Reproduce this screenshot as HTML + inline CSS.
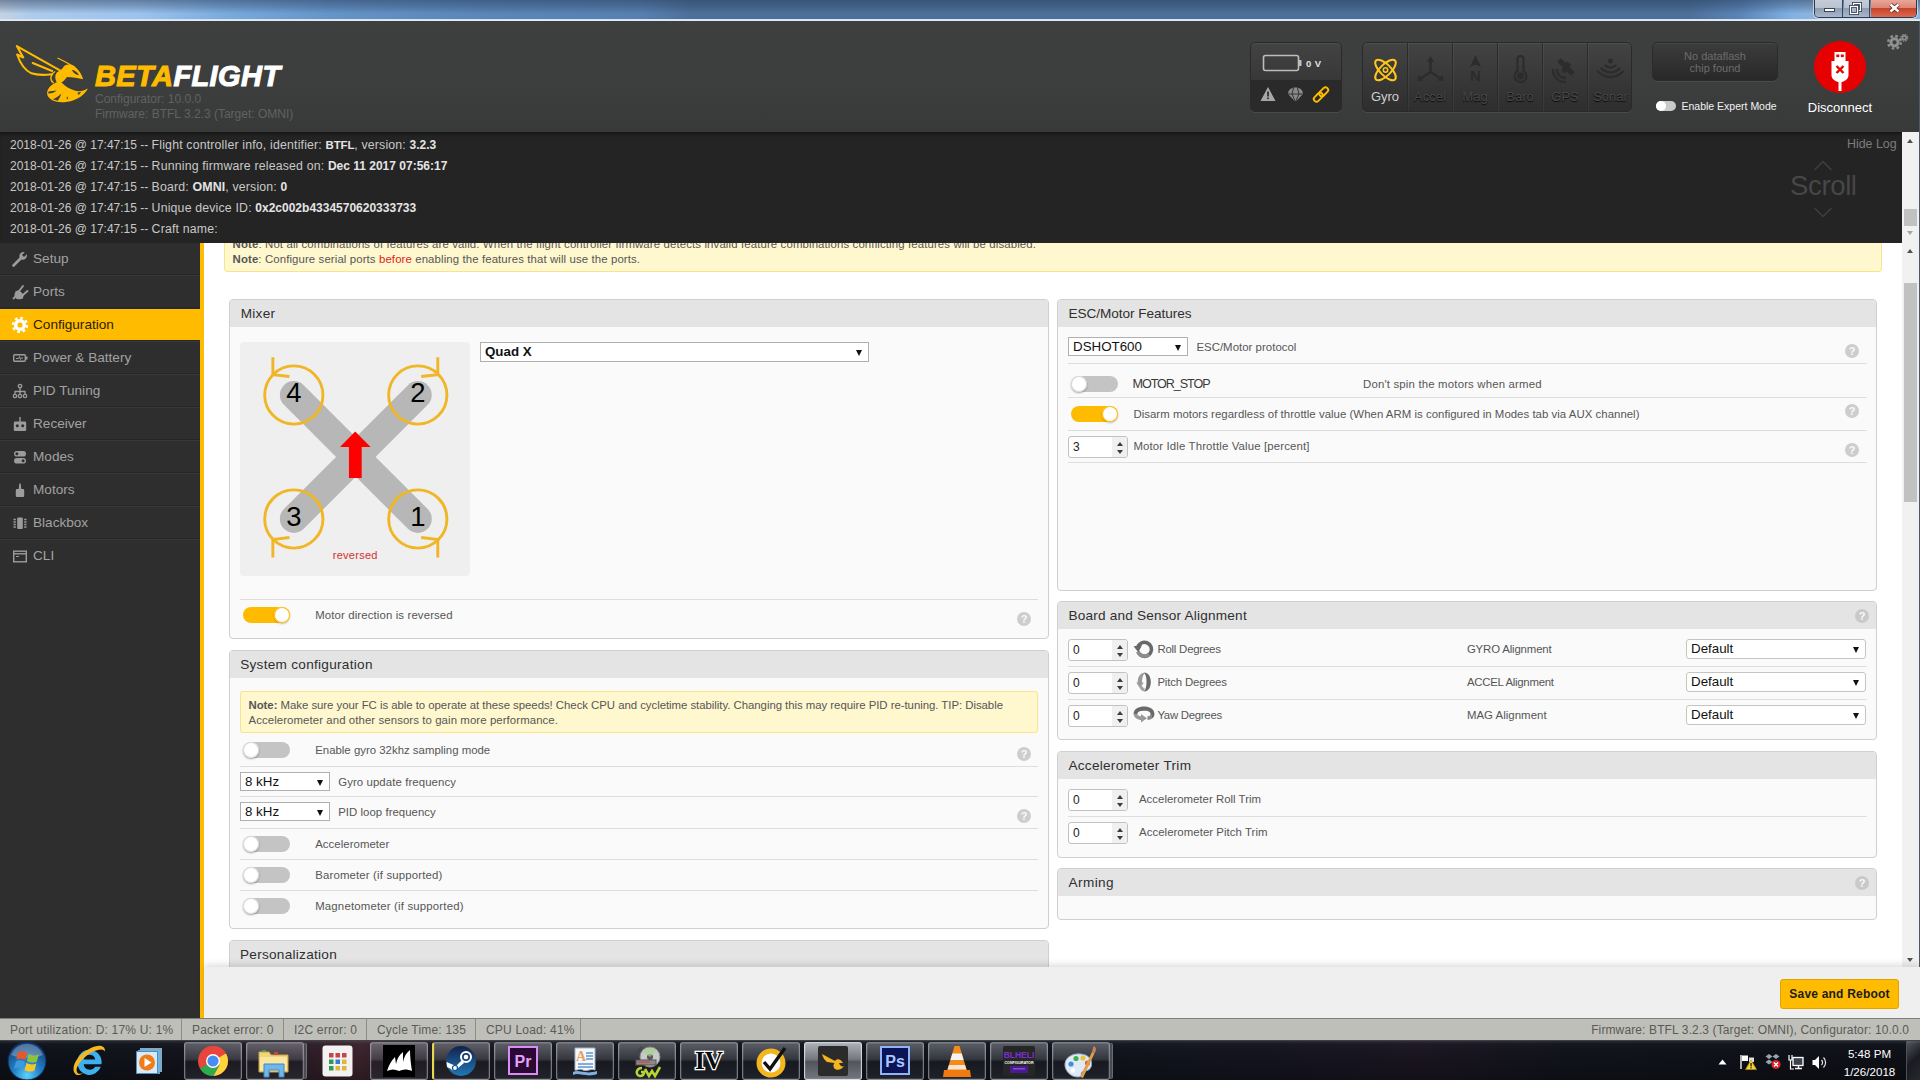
<!DOCTYPE html>
<html lang="en">
<head>
<meta charset="utf-8">
<title>Betaflight Configurator</title>
<style>
*{box-sizing:border-box;margin:0;padding:0}
html,body{width:1920px;height:1080px;overflow:hidden;background:#fff}
body{font-family:"Liberation Sans",sans-serif;font-size:12px;color:#303030;position:relative}
.abs{position:absolute}
/* ---------- window title bar ---------- */
#titlebar{left:0;top:0;width:1920px;height:21px;background:linear-gradient(180deg,rgba(38,58,88,.5) 0,rgba(38,58,88,.3) 30%,rgba(38,58,88,0) 65%),linear-gradient(90deg,#c5d3e3 0,#aecbec 30px,#9cc3ee 140px,#78a9dc 230px,#6594c8 330px,#5a86b8 480px,#5780b0 640px,#4d7099 690px,#4d7099 1690px,#5a84b6 1740px,#7fb0e3 1790px,#8fb4dc 1812px,#8fb4dc 1920px)}
#titlebar .hl{left:0;top:19px;width:1920px;height:2px;background:linear-gradient(180deg,#cfe0f3,#e8eef5)}
#winbtn{left:1814px;top:0;width:103px;height:18px;border:1px solid #2b3a4e;border-top:none;border-radius:0 0 5px 5px;overflow:hidden;box-shadow:0 0 0 1px rgba(255,255,255,.55)}
#winbtn div{position:absolute;top:0;height:17px}
/* ---------- header ---------- */
#header{left:0;top:21px;width:1920px;height:111px;background:linear-gradient(180deg,#3e403f 0,#3c3e3d 60%,#383a39 100%)}

/* header widgets */
#logo-text{left:95px;top:59px;font:italic bold 29px/34px "Liberation Sans",sans-serif;letter-spacing:.4px;color:#fff;white-space:nowrap;transform-origin:0 0;-webkit-text-stroke:1.1px currentColor}
#logo-text b{color:#ffbb00;-webkit-text-stroke:1.1px #ffbb00}
.ver{left:95px;font-size:12px;line-height:16px;color:#616161;white-space:nowrap}
.hbox{border-radius:5px;background:linear-gradient(180deg,#434343 0,#2e2e2e 100%);border:1px solid #2a2a2a;box-shadow:0 1px 0 rgba(255,255,255,.08), inset 0 1px 0 rgba(255,255,255,.06)}
#quad{left:1250px;top:42px;width:92px;height:70px;overflow:hidden}
#quad .bot{left:0;top:37px;width:92px;height:33px;background:#2a2a2a}
#sensors{left:1362px;top:42px;width:270px;height:70px;overflow:hidden}
#sensors .cell{position:absolute;top:0;width:45px;height:70px;border-right:1px solid #2b2b2b;box-shadow:1px 0 0 rgba(255,255,255,.05);text-align:center;color:#474747;font-size:12px;text-shadow:0 1px 1px rgba(0,0,0,.85)}
#sensors .cell span{position:absolute;left:0;right:0;top:47px;line-height:14px;font-size:13px}
#sensors .cell.on{color:#cfcfcf;text-shadow:none}
#dflash{left:1652px;top:42px;width:126px;height:39px;background:linear-gradient(180deg,#3c3c3c 0,#282828 100%);color:#6c6c6c;font-size:11px;line-height:12px;text-align:center;padding-top:7px}
#expert{left:1681.5px;top:99px;font-size:10.5px;line-height:14px;color:#f2f2f2;white-space:nowrap}
#expsw{left:1656px;top:101px;width:20px;height:10px;border-radius:5px;background:#c9c9c9}
#expsw i{position:absolute;left:0;top:0;width:10px;height:10px;border-radius:5px;background:#fff}
#disc{left:1814px;top:41px;width:52px;height:52px;border-radius:26px;background:#e60000}
#disctxt{left:1790px;top:100px;width:100px;text-align:center;font-size:13px;line-height:16px;color:#fff}
/* ---------- log ---------- */
#log{left:0;top:132px;width:1902px;height:111px;z-index:3;background:#242424;color:#cfcfcf;box-shadow:inset 0 4px 5px -3px rgba(0,0,0,.6)}
#logscroll{left:1902px;top:132px;width:17px;height:111px;z-index:3}

#log .ln{position:absolute;left:10px;white-space:nowrap;font-size:12.3px;letter-spacing:.18px;line-height:21px;height:21px;color:#c8c8c8}
#log .ln i{font-style:normal;font-size:12px;letter-spacing:0}
#log .ln b{font-weight:bold;color:#e4e4e4;font-size:12px;letter-spacing:0}
#log .ln b.a{font-size:11.4px;letter-spacing:-.1px}
#log .ln b.o{font-size:12.4px;letter-spacing:.1px}
#hidelog{z-index:4;left:1847px;top:136px;font-size:12.4px;line-height:16px;color:#7c7c7c;white-space:nowrap}
#scrolltxt{z-index:4;left:1790px;top:169px;font-size:27.6px;line-height:34px;color:#474747;letter-spacing:-.4px}
.sb{background:#f1f1f1}
.sb .thumb{position:absolute;left:2px;width:13px;background:#c1c1c1}
.sb .arr{position:absolute;left:5px;width:0;height:0;border-left:3.5px solid transparent;border-right:3.5px solid transparent}
.sb .up{border-bottom:4px solid #505050}
.sb .dn{border-top:4px solid #505050}
.sb .dis.dn{border-top-color:#a3a3a3}
.sb .dis.up{border-bottom-color:#a3a3a3}
/* ---------- sidebar ---------- */
#side{left:0;top:242px;width:200px;height:776px;background:#2e2e2e}
#sidebar-line{left:200px;top:242px;width:4px;height:776px;background:#ffbb00}

#side .tab{position:absolute;left:0;width:200px;height:33px;border-top:1px solid #383838;border-bottom:1px solid #262626;color:#a2a2a2;font-size:13.6px;line-height:31px;padding-left:33px;white-space:nowrap}
#side .tab svg{position:absolute;left:11px;top:7px}
#side .tab.act{background:#ffbb00;color:#2b2205;border-top-color:#2b2b2b;border-bottom-color:#262626}
#side .tab:first-child{border-top-color:#2e2e2e}
#side .tab:last-child{border-bottom-color:#2e2e2e}
/* ---------- content ---------- */
#content{left:204px;top:242px;width:1698px;height:725px;background:#fff;overflow:hidden}
#cscroll{left:1902px;top:242px;width:17px;height:725px}
#rborder{left:1919px;top:21px;width:1px;height:946px;background:#4b5a6b}
#toolbar{left:204px;top:967px;width:1716px;height:51px;background:#efefef;box-shadow:0 -3px 6px rgba(0,0,0,.12)}

/* content widgets (coordinates inside #content are page coords minus (204,242)) */
#content .box{position:absolute;border:1px solid #cfcfcf;border-radius:4px;background:#fafafa;overflow:hidden}
#content .box .hd{position:absolute;left:0;top:0;right:0;height:27px;background:#e4e4e4}
#content .t{position:absolute;white-space:nowrap;font-size:11.4px;line-height:16px;height:16px;color:#565656;transform-origin:0 50%}
#content .t.h{font-size:13.6px;line-height:18px;height:18px;color:#2f2f2f}
#content .sep{position:absolute;height:1px;background:#dedede}
#content .tg{position:absolute;width:47px;height:16px;border-radius:8px;background:#c4c4c4}
#content .tg i{position:absolute;left:0;top:0;width:16px;height:16px;border-radius:8px;background:#fff;box-shadow:0 1px 2px rgba(0,0,0,.35), inset 0 0 0 1px #d8d8d8}
#content .tg.on{background:#ffbb00}
#content .tg.on i{left:31px;box-shadow:inset 0 0 0 1px #ffbb00,0 1px 2px rgba(0,0,0,.25)}
#content .sel{position:absolute;height:20px;border:1px solid #b0b0b0;border-radius:0;background:#fff;font-size:13.33px;line-height:18px;color:#111;padding-left:4px;white-space:nowrap}
#content .sel:after{content:"";position:absolute;right:6.5px;top:6.5px;border-left:3.2px solid transparent;border-right:3.2px solid transparent;border-top:6px solid #111}
#content .num{position:absolute;width:60px;height:22px;border:1px solid #c2c2c2;border-radius:3px;background:#fff;font-size:12px;line-height:20px;color:#222;padding-left:4px}
#content .num:before{content:"";position:absolute;right:4px;top:4.5px;border-left:3.5px solid transparent;border-right:3.5px solid transparent;border-bottom:4px solid #3c3c3c}
#content .num:after{content:"";position:absolute;right:4px;top:12.5px;border-left:3.5px solid transparent;border-right:3.5px solid transparent;border-top:4px solid #3c3c3c}
#content .num u{position:absolute;right:0;top:0;width:15px;height:20px;background:#f0f0f0;border-radius:0 2px 2px 0;z-index:0}
#content .num:before,#content .num:after{z-index:1}
#content .hp{position:absolute;width:14px;height:14px;border-radius:7px;background:#cdcdcd;color:#fafafa;font-weight:bold;font-size:11px;line-height:14px;text-align:center}
#content .note{position:absolute;background:#fff7cd;border:1px solid #f9e48a;border-radius:3px}
/* ---------- status bar ---------- */
#status{left:0;top:1018px;width:1920px;height:22px;background:#bfbfb9;border-top:1px solid #7d7d79;color:#5a5a57;font-size:12px}

#status div{position:absolute;top:0;height:21px;line-height:22px;padding:0 10px;letter-spacing:.2px;border-right:1px solid #8d8d88;white-space:nowrap}
#status div.r{right:11px;border:none;padding:0;letter-spacing:.12px}
#savebtn{left:1780px;top:979px;width:119px;height:30px;border-radius:3px;background:#ffbb00;border:1px solid #e0a400;color:#1b1b1b;font-weight:bold;font-size:12px;line-height:28px;text-align:center;letter-spacing:.2px}
/* ---------- taskbar ---------- */
#taskbar{left:0;top:1040px;width:1920px;height:40px;background:linear-gradient(90deg,#0e1119 0,#12131b 180px,#2a1c25 300px,#3a222b 360px,#1c1820 440px,#11131b 620px,#10131c 1100px,#141420 1280px,#1a1521 1420px,#11131b 1560px,#0e1017 1920px);border-top:1px solid #3d4148;overflow:hidden}
#taskbar .glow{left:0;top:0;width:1920px;height:40px;background:linear-gradient(180deg,rgba(255,255,255,.10) 0,rgba(255,255,255,.02) 3px,rgba(0,0,0,0) 12px,rgba(0,0,0,.25) 100%)}
#taskbar .tb{position:absolute;top:1px;width:58px;height:38px;border-radius:3px;border:1px solid rgba(190,195,205,.55);background:linear-gradient(180deg,rgba(150,152,160,.55) 0,rgba(90,92,100,.5) 45%,rgba(30,32,38,.55) 52%,rgba(45,47,55,.6) 100%);box-shadow:inset 0 0 0 1px rgba(255,255,255,.10)}
#taskbar .tb.act{background:linear-gradient(180deg,rgba(225,228,235,.75) 0,rgba(160,163,172,.7) 45%,rgba(110,113,122,.7) 52%,rgba(150,153,162,.75) 100%);border-color:rgba(230,232,238,.8)}
#taskbar .tb.st{box-shadow:inset 0 0 0 1px rgba(255,255,255,.10), 3px 0 0 -1px rgba(70,72,80,.9), 4px 0 0 -1px rgba(190,195,205,.5)}
#taskbar .tb.yl{border-left:2px solid #e5d94a}
#taskbar .clk{left:1834px;width:71px;text-align:center;color:#fff;font-size:11.6px;line-height:15px;white-space:nowrap}
#taskbar .sd{left:1906px;top:0;width:14px;height:40px;border-left:1px solid #4c5058;background:linear-gradient(135deg,rgba(255,255,255,.28) 0,rgba(255,255,255,.05) 50%,rgba(255,255,255,.12) 100%)}
</style>
</head>
<body>
<div id="titlebar" class="abs"><div class="hl abs"></div>
 <div id="winbtn" class="abs">
  <div style="left:0;width:28px;background:linear-gradient(180deg,#c3ccd8 0,#b9c3d0 45%,#8e9db2 50%,#a9b7cb 100%);border-right:1px solid #3a4557"></div>
  <div style="left:29px;width:26px;background:linear-gradient(180deg,#c3ccd8 0,#b9c3d0 45%,#8e9db2 50%,#a9b7cb 100%);border-right:1px solid #3a4557"></div>
  <div style="left:56px;width:46px;background:linear-gradient(180deg,#e9a697 0,#dc8878 45%,#c8442c 50%,#d9694f 100%)"></div>
  <svg style="position:absolute;left:0;top:0" width="102" height="17" viewBox="0 0 102 17">
   <rect x="9.500" y="8.500" width="10" height="3" fill="#fff" stroke="#3b4658" stroke-width="1"/>
   <rect x="38.500" y="3.500" width="7" height="7" fill="none" stroke="#3b4658" stroke-width="3"/><rect x="38.500" y="3.500" width="7" height="7" fill="none" stroke="#fff" stroke-width="1.200"/>
   <rect x="35.500" y="6.500" width="7" height="7" fill="#a9b4c4" stroke="#3b4658" stroke-width="3"/><rect x="35.500" y="6.500" width="7" height="7" fill="none" stroke="#fff" stroke-width="1.200"/>
   <path d="M75.500 4.500 L83.500 11.500 M83.500 4.500 L75.500 11.500" stroke="#5a2a22" stroke-width="4.200"/><path d="M75.500 4.500 L83.500 11.500 M83.500 4.500 L75.500 11.500" stroke="#fff" stroke-width="2.400"/>
  </svg>
 </div>
</div>
<div id="header" class="abs"></div>
<svg class="abs" style="left:10px;top:38px" width="90" height="70" viewBox="0 0 1389 1080">
 <g fill="none" stroke="#ffbb00" stroke-width="32" stroke-linejoin="round" stroke-linecap="round">
  <path d="M770 500 L105 125 L205 300 L110 255 C160 400 230 500 330 545 C430 580 560 570 650 560"/>
  <path d="M350 385 L650 510"/>
  <path d="M740 312 C820 350 900 390 960 430" stroke-width="18"/>
  <path d="M690 520 C620 560 610 650 670 690" stroke-width="20"/>
 </g>
 <g fill="#ffbb00">
  <path d="M830 440 C870 400 950 400 1000 440 C1060 490 1110 560 1128 638 C1060 620 960 600 880 600 C850 640 820 670 790 690 C760 710 720 700 710 660 C690 600 700 540 740 520 C790 500 810 470 830 440 Z"/>
  <path d="M740 680 C660 700 590 760 575 830 C560 900 620 960 720 985 C860 1010 1040 960 1130 870 C1170 830 1195 800 1200 778 C1150 810 1080 830 1010 815 C920 790 850 740 800 690 Z"/>
 </g>
 <g fill="#3d3f3e">
  <path d="M955 495 C990 490 1040 530 1065 575 C1020 570 980 545 955 495 Z"/>
  <path d="M590 830 C630 820 680 815 720 812 C690 840 640 860 592 858 Z"/>
  <path d="M660 945 C710 925 760 890 790 860 C780 900 760 940 735 968 Z"/>
  <path d="M870 930 L885 900 L900 950 Z"/>
  <path d="M1040 845 L1100 830 L1060 880 Z"/>
 </g>
</svg>
<div id="logo-text" class="abs"><b>BETA</b>FLIGHT</div>
<div class="ver abs" style="top:91px">Configurator: 10.0.0</div>
<div class="ver abs" style="top:106px">Firmware: BTFL 3.2.3 (Target: OMNI)</div>

<div id="quad" class="abs hbox"><div class="bot abs"></div>
 <svg class="abs" style="left:0;top:0" width="92" height="70" viewBox="0 0 92 70">
  <rect x="12.5" y="12.500" width="35" height="15" rx="2" fill="none" stroke="#bdbdbd" stroke-width="1.6"/>
  <rect x="48" y="17" width="2.500" height="6" fill="#bdbdbd"/>
  <text x="55" y="24" font-family="Liberation Sans,sans-serif" font-size="9.5" font-weight="bold" fill="#e0e0e0" letter-spacing=".4">0 V</text>
  <path d="M17 44 L24.500 58 L9.500 58 Z" fill="#a8a8a8"/><rect x="16.200" y="48.500" width="1.700" height="5" fill="#2a2a2a"/><rect x="16.200" y="54.500" width="1.700" height="1.700" fill="#2a2a2a"/>
  <path d="M37 51 C37 46.500 41 44.500 44.500 44.500 C48 44.500 52 46.500 52 51 L44.500 59 Z" fill="#8a8a8a"/>
  <path d="M37 51 L52 51 M41 51 L44.500 59 L48 51 M41 51 L42.500 45 M48 51 L46.500 45" stroke="#2a2a2a" stroke-width=".9" fill="none"/>
  <g fill="none" stroke="#ffbb00" stroke-width="1.900">
   <rect x="-5.200" y="-2.700" width="10.400" height="5.400" rx="2.700" transform="translate(67.300 54.200) rotate(-45)"/>
   <rect x="-5.200" y="-2.700" width="10.400" height="5.400" rx="2.700" transform="translate(72.700 48.800) rotate(-45)"/>
  </g>
 </svg>
</div>

<div id="sensors" class="abs hbox">
 <div class="cell on" style="left:0"><span>Gyro</span></div>
 <div class="cell" style="left:45px"><span>Accel</span></div>
 <div class="cell" style="left:90px"><span>Mag</span></div>
 <div class="cell" style="left:135px"><span>Baro</span></div>
 <div class="cell" style="left:180px"><span>GPS</span></div>
 <div class="cell" style="left:225px;border-right:none;box-shadow:none"><span>Sonar</span></div>
 <svg class="abs" style="left:0;top:0" width="270" height="70" viewBox="0 0 270 70">
  <g fill="none" stroke="#ffc61a" stroke-width="2">
   <ellipse cx="22.500" cy="27" rx="13.500" ry="5.500" transform="rotate(45 22.500 27)"/>
   <ellipse cx="22.500" cy="27" rx="13.500" ry="5.500" transform="rotate(-45 22.500 27)"/>
   <circle cx="22.500" cy="27" r="2.200" stroke-width="1.600"/>
  </g>
  <g stroke="#2c2c2c" fill="#2c2c2c" stroke-width="2.400" stroke-linecap="round">
   <path d="M67.500 17 L67.500 29 L57.500 35.500 M67.500 29 L77.500 35.500" fill="none"/>
   <path d="M67.500 13 L71 19 L64 19 Z M54 38 L56 32 L60.500 37.500 Z M81 38 L79 32 L74.500 37.500 Z" stroke="none"/>
  </g>
  <g fill="#2c2c2c">
   <path d="M112.500 12 L118 24 L112.500 21.500 L107 24 Z"/>
   <text x="112.500" y="38" text-anchor="middle" font-family="Liberation Sans,sans-serif" font-weight="bold" font-size="15" fill="#2c2c2c">N</text>
  </g>
  <g fill="none" stroke="#2c2c2c" stroke-width="2.200">
   <path d="M154.500 28 L154.500 16 a3 3 0 0 1 6 0 L160.500 28 a6 6 0 1 1 -6 0 Z"/>
   <circle cx="157.500" cy="33" r="2.300" fill="#2c2c2c"/>
  </g>
  <g fill="none" stroke="#2c2c2c" stroke-width="2.400" stroke-linecap="round">
   <path d="M194 27 a8 8 0 0 0 8 8 M190 27 a12 12 0 0 0 12 12"/>
   <path d="M196 17 L202 23 M204 25 L210 31 M200 29 L206 20" stroke-width="5" stroke-linecap="butt"/>
  </g>
  <g fill="none" stroke="#2c2c2c" stroke-width="2.400" stroke-linecap="round">
   <circle cx="247.500" cy="18" r="1.300" fill="#2c2c2c"/>
   <path d="M242.500 22.500 a7 7 0 0 0 10 0 M238.500 25.500 a12.500 12.500 0 0 0 18 0 M235 28.500 a17 17 0 0 0 25 0"/>
  </g>
 </svg>
</div>

<div id="dflash" class="abs hbox">No dataflash<br>chip found</div>
<div id="expsw" class="abs"><i></i></div>
<div id="expert" class="abs">Enable Expert Mode</div>
<div id="disc" class="abs">
 <svg width="52" height="52" viewBox="0 0 52 52" style="position:absolute;left:0;top:0">
  <path d="M20.500 11 L31.500 11 L31.500 20 L20.500 20 Z" fill="#fff"/>
  <rect x="22.300" y="13.500" width="3" height="2.600" fill="#e60000"/><rect x="26.800" y="13.500" width="3" height="2.600" fill="#e60000"/>
  <path d="M17.500 20 L34.500 20 L34.500 34 C34.500 38 31 40.500 27.500 41 L27.500 50 L24.500 50 L24.500 41 C21 40.500 17.500 38 17.500 34 Z" fill="#fff"/>
  <path d="M22.500 25 L29.500 32 M29.500 25 L22.500 32" stroke="#e60000" stroke-width="2.400"/>
 </svg>
</div>
<div id="disctxt" class="abs">Disconnect</div>
<svg class="abs" style="left:1886px;top:33px" width="24" height="18" viewBox="0 0 24 18">
 <g fill="none" stroke="#8f8f8f">
  <circle cx="8.500" cy="9.300" r="3.600" stroke-width="3"/>
  <circle cx="8.500" cy="9.300" r="6.300" stroke-width="2.400" stroke-dasharray="2.600 2.350"/>
  <circle cx="18.300" cy="4.800" r="1.900" stroke-width="1.600"/>
  <circle cx="18.300" cy="4.800" r="3.300" stroke-width="1.400" stroke-dasharray="1.500 1.090"/>
 </g>
</svg>
<div id="log" class="abs">
 <div class="ln" style="top:3px"><i>2018-01-26 @ 17:47:15 -- </i>Flight controller info, identifier: <b class="a">BTFL</b>, version: <b>3.2.3</b></div>
 <div class="ln" style="top:24px"><i>2018-01-26 @ 17:47:15 -- </i>Running firmware released on: <b>Dec 11 2017 07:56:17</b></div>
 <div class="ln" style="top:45px"><i>2018-01-26 @ 17:47:15 -- </i>Board: <b class="o">OMNI</b>, version: <b>0</b></div>
 <div class="ln" style="top:66px"><i>2018-01-26 @ 17:47:15 -- </i>Unique device ID: <b>0x2c002b4334570620333733</b></div>
 <div class="ln" style="top:87px"><i>2018-01-26 @ 17:47:15 -- </i>Craft name: </div>
</div>
<div id="hidelog" class="abs">Hide Log</div>
<div id="scrolltxt" class="abs">Scroll</div>
<svg class="abs" style="left:1812px;top:158px;z-index:4" width="22" height="62" viewBox="0 0 22 62"><path d="M2.500 12 L11 3.500 L19.500 12 M2.500 50 L11 58.500 L19.500 50" fill="none" stroke="#3f3f3f" stroke-width="1.500"/></svg>
<div id="logscroll" class="abs sb"><div class="arr up" style="top:7px"></div><div class="thumb" style="top:77px;height:17px"></div><div class="arr dn dis" style="top:99px"></div></div>
<div id="side" class="abs">
 <div class="tab" style="top:0px"><svg width="18" height="18" viewBox="0 0 18 18"><path d="M2.500 15.500 L9.500 8.500" stroke="#9c9c9c" stroke-width="2.600" stroke-linecap="round" fill="none"/><path d="M15.800 4.200 L13 7 L11 5 L13.800 2.200 A4.200 4.200 0 0 0 8.600 7.600 L10.400 9.400 A4.200 4.200 0 0 0 15.800 4.200 Z" fill="#9c9c9c"/></svg>Setup</div>
 <div class="tab" style="top:33px"><svg width="18" height="18" viewBox="0 0 18 18"><path d="M2 16 L5.500 12.500" stroke="#9c9c9c" stroke-width="1.800" fill="none"/><path d="M4.500 9 L11 15.500 C8 17 5 16.500 4 14 C3 12 3.500 10 4.500 9 Z M4 8.500 L11.500 16 L13 12 L8 7 Z" fill="#9c9c9c"/><path d="M8.500 7.500 L12 3 M12.500 11.500 L16.500 8" stroke="#9c9c9c" stroke-width="1.900" stroke-linecap="round"/></svg>Ports</div>
 <div class="tab act" style="top:66px"><svg width="18" height="18" viewBox="0 0 18 18"><circle cx="9" cy="9" r="4.300" fill="none" stroke="#fff" stroke-width="3.400"/><circle cx="9" cy="9" r="7" fill="none" stroke="#fff" stroke-width="2.400" stroke-dasharray="2.750 2.750"/></svg>Configuration</div>
 <div class="tab" style="top:99px"><svg width="18" height="18" viewBox="0 0 18 18"><rect x="2.700" y="5.700" width="11.600" height="6.600" rx="1" fill="none" stroke="#9c9c9c" stroke-width="1.400"/><rect x="15" y="7.500" width="1.500" height="3" fill="#9c9c9c"/><path d="M5 9.500 L7.500 9.500 L8.500 7.500 L9.500 10.500 L10.300 9 L12 9" fill="none" stroke="#9c9c9c" stroke-width="1"/></svg>Power &amp; Battery</div>
 <div class="tab" style="top:132px"><svg width="18" height="18" viewBox="0 0 18 18"><g fill="none" stroke="#9c9c9c" stroke-width="1.300"><circle cx="9" cy="4" r="1.700"/><circle cx="4" cy="14" r="1.700"/><circle cx="9" cy="14" r="1.700"/><circle cx="14" cy="14" r="1.700"/><path d="M9 5.700 L9 12.300 M4 12.300 L4 9.500 L14 9.500 L14 12.300"/></g></svg>PID Tuning</div>
 <div class="tab" style="top:165px"><svg width="18" height="18" viewBox="0 0 18 18"><path d="M8.300 2 L9.700 2 L9.700 6.500 L14 6.500 Q15.200 6.500 15.200 7.700 L15.200 14.800 Q15.200 16 14 16 L4 16 Q2.800 16 2.800 14.800 L2.800 7.700 Q2.800 6.500 4 6.500 L8.300 6.500 Z" fill="#9c9c9c"/><circle cx="6.300" cy="10.800" r="1.500" fill="#2e2e2e"/><circle cx="11.700" cy="10.800" r="1.500" fill="#2e2e2e"/></svg>Receiver</div>
 <div class="tab" style="top:198px"><svg width="18" height="18" viewBox="0 0 18 18"><rect x="3" y="3" width="12" height="5.600" rx="2.800" fill="#9c9c9c"/><rect x="3" y="10" width="12" height="5.600" rx="2.800" fill="#9c9c9c"/><circle cx="5.900" cy="5.800" r="1.500" fill="#2e2e2e"/><circle cx="12.100" cy="12.800" r="1.500" fill="#2e2e2e"/></svg>Modes</div>
 <div class="tab" style="top:231px"><svg width="18" height="18" viewBox="0 0 18 18"><path d="M8.300 2.500 L9.700 2.500 L10.300 8 L12 8 Q13.200 8 13.200 9.200 L13.200 15 Q13.200 16 12 16 L6 16 Q4.800 16 4.800 15 L4.800 9.200 Q4.800 8 6 8 L7.700 8 Z" fill="#9c9c9c"/></svg>Motors</div>
 <div class="tab" style="top:264px"><svg width="18" height="18" viewBox="0 0 18 18"><rect x="6.200" y="3.500" width="5.600" height="11.500" rx="1" fill="#9c9c9c"/><path d="M2.500 5.500 L4.800 5.500 M2.500 8 L4.800 8 M2.500 10.500 L4.800 10.500 M2.500 13 L4.800 13 M13.200 5.500 L15.500 5.500 M13.200 8 L15.500 8 M13.200 10.500 L15.500 10.500 M13.200 13 L15.500 13" stroke="#9c9c9c" stroke-width="1.300"/></svg>Blackbox</div>
 <div class="tab" style="top:297px"><svg width="18" height="18" viewBox="0 0 18 18"><rect x="2.700" y="4.200" width="12.600" height="10.600" fill="none" stroke="#9c9c9c" stroke-width="1.400"/><path d="M2.700 6.800 L15.300 6.800" stroke="#9c9c9c" stroke-width="1.400"/><path d="M5 9.500 L8 9.500" stroke="#9c9c9c" stroke-width="1"/></svg>CLI</div>
</div>
<div id="sidebar-line" class="abs"></div>
<div id="content" class="abs">
<!--CONTENT-START-->
<div class="note" style="left:20px;top:-42px;width:1658px;height:72px"></div>
<div class="box" style="left:25px;top:57px;width:820px;height:340px"><div class="hd"></div></div>
<div style="position:absolute;left:36px;top:100px;width:230px;height:234px;background:#efefef;border-radius:4px"></div>
<svg style="position:absolute;left:20px;top:88px" width="260" height="260" viewBox="0 0 1080 1080">
 <g stroke="#b7b7b7" stroke-width="116" stroke-linecap="round"><path d="M290 270 L805 785"/><path d="M805 270 L290 785"/></g>
 <g fill="none" stroke="#f0b626" stroke-width="12">
  <circle cx="290" cy="270" r="121"/><circle cx="805" cy="270" r="121"/><circle cx="290" cy="785" r="121"/><circle cx="805" cy="785" r="121"/>
  <path d="M203 113 L203 186 L272 193"/><path d="M888 113 L888 186 L819 193"/>
  <path d="M203 945 L203 870 L272 862"/><path d="M888 945 L888 870 L819 862"/>
 </g>
 <path d="M545 422 L609 486 L572 486 L572 615 L519 615 L519 486 L482 486 Z" fill="#ff0000"/>
 <g font-family="Liberation Sans,sans-serif" font-size="114" fill="#000" text-anchor="middle">
  <text x="290" y="301">4</text><text x="805" y="301">2</text><text x="290" y="816">3</text><text x="805" y="816">1</text>
 </g>
 <text x="545" y="952" font-family="Liberation Sans,sans-serif" font-size="46" fill="#d32f2f" text-anchor="middle" letter-spacing="1">reversed</text>
</svg>
<div class="sel" style="left:276px;top:100px;width:389px;height:20px;line-height:18px;font-weight:bold;">Quad X</div>
<div class="sep" style="left:36px;top:357px;width:798px"></div>
<div class="tg on" style="left:39px;top:365px"><i></i></div>
<div class="hp" style="left:813px;top:370px;">?</div>
<div class="box" style="left:25px;top:408px;width:820px;height:279px"><div class="hd"></div></div>
<div class="note" style="left:36px;top:449px;width:798px;height:42px"></div>
<div class="tg" style="left:39px;top:500px"><i></i></div>
<div class="hp" style="left:813px;top:505px;">?</div>
<div class="sep" style="left:36px;top:524px;width:798px"></div>
<div class="sel" style="left:36px;top:530px;width:90px;height:19px;line-height:17px;">8 kHz</div>
<div class="sep" style="left:36px;top:554px;width:798px"></div>
<div class="sel" style="left:36px;top:560px;width:90px;height:19px;line-height:17px;">8 kHz</div>
<div class="hp" style="left:813px;top:567px;">?</div>
<div class="sep" style="left:36px;top:586px;width:798px"></div>
<div class="tg" style="left:39px;top:594px"><i></i></div>
<div class="sep" style="left:36px;top:617px;width:798px"></div>
<div class="tg" style="left:39px;top:625px"><i></i></div>
<div class="sep" style="left:36px;top:648px;width:798px"></div>
<div class="tg" style="left:39px;top:656px"><i></i></div>
<div class="box" style="left:25px;top:698px;width:820px;height:60px"><div class="hd"></div></div>
<div class="box" style="left:853px;top:57px;width:820px;height:292px"><div class="hd"></div></div>
<div class="sel" style="left:864px;top:95px;width:120px;height:19px;line-height:17px;">DSHOT600</div>
<div class="hp" style="left:1641px;top:102px;">?</div>
<div class="sep" style="left:864px;top:121px;width:799px"></div>
<div class="tg" style="left:867px;top:134px"><i></i></div>
<div class="sep" style="left:864px;top:155px;width:799px"></div>
<div class="tg on" style="left:867px;top:164px"><i></i></div>
<div class="hp" style="left:1641px;top:162px;">?</div>
<div class="sep" style="left:864px;top:188px;width:799px"></div>
<div class="num" style="left:864px;top:194px"><u></u>3</div>
<div class="hp" style="left:1641px;top:201px;">?</div>
<div class="sep" style="left:864px;top:220px;width:799px"></div>
<div class="box" style="left:853px;top:359px;width:820px;height:139px"><div class="hd"></div></div>
<div class="hp" style="left:1651px;top:367px;background:#c9c9c9;">?</div>
<div class="num" style="left:864px;top:397px"><u></u>0</div>
<svg style="position:absolute;left:928px;top:395px" width="24" height="24" viewBox="0 0 24 24"><path d="M5.600 11 A7 7 0 1 1 8 17.700" fill="none" stroke="#686868" stroke-width="3.600"/><path d="M5.800 14.500 A7 7 0 0 0 17 17.300" fill="none" stroke="#8c8c8c" stroke-width="3.600"/><path d="M1.600 9.300 L10 8.300 L6.300 15.300 Z" fill="#686868"/></svg>
<div class="sel" style="left:1482px;top:397px;width:180px;height:20px;line-height:18px;border-radius:3px;border-color:#c4c4c4;">Default</div>
<div class="num" style="left:864px;top:430px"><u></u>0</div>
<svg style="position:absolute;left:928px;top:428px" width="24" height="24" viewBox="0 0 24 24"><path d="M12 2.800 C7 3.500 5.500 9 5.800 12.500 L4.200 12.500 L8 18 L11.800 12.500 L10 12.500 C10 9 10.500 5 13 3 Z" fill="#9a9a9a"/><path d="M7.300 16.500 C8 19.500 9.800 21.300 12.500 21.500 L12.500 18 C11 17.800 10.300 16.800 10 15.500 Z" fill="#a4a4a4"/><path d="M12 2.600 C16.500 2.600 18.800 7 18.800 12 C18.800 17 16.500 21.500 12 21.500 C14 19 14.500 15.500 14.500 12 C14.500 8.500 14 5 12 2.600 Z" fill="#6a6a6a"/></svg>
<div class="sel" style="left:1482px;top:430px;width:180px;height:20px;line-height:18px;border-radius:3px;border-color:#c4c4c4;">Default</div>
<div class="num" style="left:864px;top:463px"><u></u>0</div>
<svg style="position:absolute;left:927px;top:460px" width="26" height="24" viewBox="0 0 26 24"><path d="M2.600 12 C2.600 6.500 8 4.400 13 4.400 C18 4.400 23.400 6.500 23.400 12 C23.400 14 22.500 15.500 21 16.500 L19 13 C19.500 12.600 19.600 12.300 19.600 12 C19.400 9.500 16.500 8.800 13 8.800 C9.500 8.800 6.600 9.500 6.400 12 Z" fill="#6a6a6a"/><path d="M2.600 12 C2.800 16 7 17.800 10 18.100 L10 20.500 L16 16.300 L10 12 L10 14.200 C8 14 6.600 13.300 6.400 12 Z" fill="#9a9a9a"/><path d="M16.500 18 C18.500 17.700 20 17.200 21 16.500 L21 12.500 C20 13.500 18.500 14 16.500 14.300 Z" fill="#8a8a8a"/></svg>
<div class="sel" style="left:1482px;top:463px;width:180px;height:20px;line-height:18px;border-radius:3px;border-color:#c4c4c4;">Default</div>
<div class="sep" style="left:864px;top:424px;width:799px"></div>
<div class="sep" style="left:864px;top:457px;width:799px"></div>
<div class="box" style="left:853px;top:509px;width:820px;height:107px"><div class="hd"></div></div>
<div class="num" style="left:864px;top:547px"><u></u>0</div>
<div class="sep" style="left:864px;top:574px;width:799px"></div>
<div class="num" style="left:864px;top:580px"><u></u>0</div>
<div class="box" style="left:853px;top:626px;width:820px;height:52px"><div class="hd"></div></div>
<div class="hp" style="left:1651px;top:634px;background:#c9c9c9;">?</div>
<div class="t" style="left:28.6px;top:-6.2px;letter-spacing:0.130px;"><b>Note</b>: Not all combinations of features are valid. When the flight controller firmware detects invalid feature combinations conflicting features will be disabled.</div>
<div class="t" style="left:28.6px;top:9.0px;letter-spacing:0.113px;"><b>Note</b>: Configure serial ports <span style="color:#d9251d">before</span> enabling the features that will use the ports.</div>
<div class="t h" style="left:36.7px;top:62.8px;letter-spacing:0.266px;">Mixer</div>
<div class="t" style="left:111.2px;top:365.0px;letter-spacing:0.126px;">Motor direction is reversed</div>
<div class="t h" style="left:36.2px;top:414.2px;letter-spacing:0.280px;">System configuration</div>
<div class="t" style="left:44.5px;top:455.0px;letter-spacing:-0.037px;"><b>Note:</b> Make sure your FC is able to operate at these speeds! Check CPU and cycletime stability. Changing this may require PID re-tuning. TIP: Disable</div>
<div class="t" style="left:44.5px;top:469.5px;letter-spacing:0.088px;">Accelerometer and other sensors to gain more performance.</div>
<div class="t" style="left:111.2px;top:500.0px;letter-spacing:0.008px;">Enable gyro 32khz sampling mode</div>
<div class="t" style="left:134.2px;top:532.0px;letter-spacing:0.095px;">Gyro update frequency</div>
<div class="t" style="left:134.2px;top:562.0px;letter-spacing:0.042px;">PID loop frequency</div>
<div class="t" style="left:111.2px;top:594.0px;letter-spacing:0.047px;">Accelerometer</div>
<div class="t" style="left:111.2px;top:625.0px;letter-spacing:0.159px;">Barometer (if supported)</div>
<div class="t" style="left:111.2px;top:656.0px;letter-spacing:0.176px;">Magnetometer (if supported)</div>
<div class="t h" style="left:36.0px;top:703.8px;letter-spacing:0.268px;">Personalization</div>
<div class="t h" style="left:864.4px;top:62.8px;letter-spacing:-0.042px;">ESC/Motor Features</div>
<div class="t" style="left:992.4px;top:97.0px;letter-spacing:0.036px;">ESC/Motor protocol</div>
<div class="t" style="left:928.5px;top:134.0px;letter-spacing:-1.069px;font-size:12.6px;color:#3a3a3a;">MOTOR_STOP</div>
<div class="t" style="left:1159.0px;top:134.0px;letter-spacing:0.177px;">Don't spin the motors when armed</div>
<div class="t" style="left:929.4px;top:164.0px;letter-spacing:0.036px;">Disarm motors regardless of throttle value (When ARM is configured in Modes tab via AUX channel)</div>
<div class="t" style="left:929.4px;top:196.0px;letter-spacing:0.145px;">Motor Idle Throttle Value [percent]</div>
<div class="t h" style="left:864.4px;top:365.0px;letter-spacing:0.209px;">Board and Sensor Alignment</div>
<div class="t" style="left:953.4px;top:398.8px;letter-spacing:-0.213px;">Roll Degrees</div>
<div class="t" style="left:1262.9px;top:398.8px;letter-spacing:-0.149px;">GYRO Alignment</div>
<div class="t" style="left:953.4px;top:431.8px;letter-spacing:-0.162px;">Pitch Degrees</div>
<div class="t" style="left:1262.9px;top:431.8px;letter-spacing:-0.261px;">ACCEL Alignment</div>
<div class="t" style="left:953.4px;top:464.8px;letter-spacing:-0.273px;">Yaw Degrees</div>
<div class="t" style="left:1262.9px;top:464.8px;letter-spacing:0.047px;">MAG Alignment</div>
<div class="t h" style="left:864.4px;top:515.0px;letter-spacing:0.280px;">Accelerometer Trim</div>
<div class="t" style="left:935.0px;top:548.7px;letter-spacing:0.021px;">Accelerometer Roll Trim</div>
<div class="t" style="left:935.0px;top:581.7px;letter-spacing:0.055px;">Accelerometer Pitch Trim</div>
<div class="t h" style="left:864.4px;top:632.0px;letter-spacing:0.447px;">Arming</div>
<!--CONTENT-END-->
</div>
<div id="cscroll" class="abs sb"><div class="arr up" style="top:7px"></div><div class="thumb" style="top:41px;height:219px"></div><div class="arr dn" style="top:716px"></div></div>
<div id="rborder" class="abs"></div>
<div id="toolbar" class="abs"></div>
<div id="savebtn" class="abs">Save and Reboot</div>
<div id="status" class="abs">
 <div style="left:0;width:182px">Port utilization: D: 17% U: 1%</div>
 <div style="left:182px;width:102px">Packet error: 0</div>
 <div style="left:284px;width:83px">I2C error: 0</div>
 <div style="left:367px;width:109px">Cycle Time: 135</div>
 <div style="left:476px;width:105px">CPU Load: 41%</div>
 <div class="r">Firmware: BTFL 3.2.3 (Target: OMNI), Configurator: 10.0.0</div>
</div>
<div id="taskbar" class="abs">
 <div class="glow abs"></div>
 <!-- start orb -->
 <svg class="abs" style="left:6px;top:-1px" width="42" height="42" viewBox="0 0 42 42">
  <defs><radialGradient id="orb" cx="50%" cy="88%" r="85%"><stop offset="0" stop-color="#5fd2f7"/><stop offset=".4" stop-color="#2484cc"/><stop offset="1" stop-color="#123a70"/></radialGradient></defs>
  <circle cx="21" cy="21" r="19" fill="url(#orb)" stroke="#0b2c55" stroke-width="1"/>
  <path d="M5 15 A17 17 0 0 1 37 15 C28 19 14 19 5 15 Z" fill="rgba(255,255,255,.28)"/>
  <g transform="translate(20.500 21) scale(1.320) translate(-19.500 -21)"><path d="M13 14.500 C15.500 13 18 13.500 20 15 L18.500 20.500 C16.500 19 14 19 11.800 20 Z" fill="#e8572a"/>
  <path d="M21.300 15.500 C23.500 17 26 17.300 28.800 16 L27.300 21.500 C24.800 22.800 22 22.300 19.800 21 Z" fill="#8cc43c"/>
  <path d="M11.500 21.300 C13.800 20 16.200 20.300 18.200 21.800 L16.700 27.300 C14.800 25.800 12.300 25.700 10 26.800 Z" fill="#3c9ae0"/>
  <path d="M19.500 22.300 C21.700 23.800 24.300 24 27 22.800 L25.500 28.300 C23 29.500 20.300 29.200 18 27.800 Z" fill="#f6c62a"/></g>
 </svg>
 <!-- IE -->
 <svg class="abs" style="left:71px;top:1px" width="38" height="36" viewBox="0 0 36 34">
  <path d="M6 19 A11.500 11.500 0 1 1 28.800 21 L12 21 A6 6 0 0 0 23 23.500 L28.300 23.500 A11.500 11.500 0 0 1 6 19 Z M12 16.500 L23 16.500 A5.600 5.600 0 0 0 12 16.500 Z" fill="#3fb0ee"/>
  <path d="M4 30 C-1 24 6 12 18 6 C26 2 33 3 32 9 C31 6 26 6.500 20 9.500 C10 15 3 25 6 29 C7 30.500 10 30 12 29 C8 32 5 31.500 4 30 Z" fill="#f3b822"/>
 </svg>
 <!-- WMP -->
 <svg class="abs" style="left:134px;top:4px" width="32" height="32" viewBox="0 0 32 32">
  <rect x="6" y="3" width="22" height="24" fill="#9dd0f0" opacity=".8"/><rect x="4" y="5" width="22" height="24" fill="#6db3e6" opacity=".9"/>
  <rect x="2.500" y="6.500" width="21" height="22" fill="#dbe9f4" stroke="#4e8cc4"/>
  <circle cx="13" cy="17.500" r="8" fill="#f07d1c"/><path d="M10.500 13 L17.500 17.500 L10.500 22 Z" fill="#fff"/>
 </svg>
 <!-- buttons -->
 <div class="tb" style="left:184px"></div><div class="tb st" style="left:246px"></div>
 <div class="tb" style="left:370px"></div><div class="tb yl" style="left:432px"></div><div class="tb" style="left:494px"></div>
 <div class="tb" style="left:556px"></div><div class="tb" style="left:618px"></div><div class="tb" style="left:680px"></div>
 <div class="tb" style="left:742px"></div><div class="tb act" style="left:804px"></div><div class="tb" style="left:866px"></div>
 <div class="tb" style="left:928px"></div><div class="tb" style="left:990px"></div><div class="tb st" style="left:1052px"></div>
 <!-- chrome -->
 <svg class="abs" style="left:197px;top:4px" width="32" height="32" viewBox="0 0 32 32">
  <circle cx="16" cy="16" r="15" fill="#e8453c"/>
  <path d="M16 16 L3 23.500 A15 15 0 0 0 16.500 31 L22.500 19.800 Z" fill="#2da94f"/>
  <path d="M16 16 L29 8.500 A15 15 0 0 1 16.500 31 L22.800 19.800 Z" fill="#fdd53b" transform="rotate(0 16 16)"/>
  <path d="M16 9 L29.300 9 A15 15 0 0 0 3 8.500 L9.800 19.500 Z" fill="#e8453c"/>
  <circle cx="16" cy="16" r="7" fill="#fff"/><circle cx="16" cy="16" r="5.600" fill="#4a8af4"/>
 </svg>
 <!-- explorer -->
 <svg class="abs" style="left:257px;top:5px" width="34" height="32" viewBox="0 0 34 32">
  <path d="M2 6 L12 6 L14 9 L31 9 L31 26 L2 26 Z" fill="#f2d479" stroke="#c9a748"/>
  <path d="M5 4 L9 4 L9 6 L5 6 Z" fill="#4fa04a"/><path d="M17 6 L21 6 L21 9 L17 9 Z" fill="#c44c3a"/>
  <rect x="3" y="11" width="27" height="14" fill="#f9e6a3"/>
  <path d="M7 18 L27 18 L27 31 L22 31 L22 24 L12 24 L12 31 L7 31 Z" fill="#6fb7ea" stroke="#3e86c4"/>
 </svg>
 <!-- apps grid -->
 <svg class="abs" style="left:322px;top:4px" width="31" height="32" viewBox="0 0 31 32">
  <rect x=".5" y=".5" width="30" height="31" rx="3" fill="#f3f1f1"/>
  <g><rect x="7" y="8" width="4.500" height="4.500" fill="#c14848"/><rect x="13.500" y="8" width="4.500" height="4.500" fill="#c14848"/><rect x="20" y="8" width="4.500" height="4.500" fill="#c14848"/>
  <rect x="7" y="14.500" width="4.500" height="4.500" fill="#2f9a55"/><rect x="13.500" y="14.500" width="4.500" height="4.500" fill="#3a7bd0"/><rect x="20" y="14.500" width="4.500" height="4.500" fill="#e1b73a"/>
  <rect x="7" y="21" width="4.500" height="4.500" fill="#2f9a55"/><rect x="13.500" y="21" width="4.500" height="4.500" fill="#e1b73a"/><rect x="20" y="21" width="4.500" height="4.500" fill="#e1b73a"/></g>
 </svg>
 <!-- corsair -->
 <svg class="abs" style="left:383px;top:4px" width="32" height="32" viewBox="0 0 32 32">
  <rect width="32" height="32" fill="#000"/>
  <path d="M4 26 C6 20 8 16 12 12 L13 19 C14 14 16 10 20 7 L20 17 C21 12 23 8 27 5 C27 12 28 20 29 26 C24 24 20 24 16 26 C12 24 8 24 4 26 Z" fill="#fff"/>
 </svg>
 <!-- steam -->
 <svg class="abs" style="left:445px;top:4px" width="32" height="32" viewBox="0 0 32 32">
  <defs><linearGradient id="stm" x1="0" y1="0" x2="0" y2="1"><stop offset="0" stop-color="#12224a"/><stop offset="1" stop-color="#1f78b8"/></linearGradient></defs>
  <circle cx="16" cy="16" r="15" fill="url(#stm)"/>
  <circle cx="21" cy="12" r="5" fill="none" stroke="#fff" stroke-width="2"/><circle cx="21" cy="12" r="2.300" fill="#fff"/>
  <path d="M1.500 17 L11 21 L17 15 L19 18 L13 23 A4 4 0 0 1 6 24 L2 22 Z" fill="#fff"/><circle cx="10" cy="23" r="2.500" fill="none" stroke="#1b4f86" stroke-width="1.200"/>
 </svg>
 <!-- premiere -->
 <svg class="abs" style="left:508px;top:5px" width="30" height="29" viewBox="0 0 30 29">
  <rect x="1" y="1" width="28" height="27" fill="#2a0a34" stroke="#d88cf4" stroke-width="2"/>
  <text x="15" y="21" text-anchor="middle" font-family="Liberation Sans,sans-serif" font-weight="bold" font-size="16" fill="#e3a2fa">Pr</text>
 </svg>
 <!-- doc A -->
 <svg class="abs" style="left:569px;top:4px" width="32" height="33" viewBox="0 0 32 33">
  <path d="M6 3 L26 3 L26 25 C22 23 18 27 14 25 C10 23 8 26 6 25 Z" fill="#f4f8fc" stroke="#9db4cc"/>
  <path d="M4 27 C10 24 16 30 28 26 L28 29 C18 33 10 27 4 30 Z" fill="#7fb0e0"/>
  <text x="12" y="16" text-anchor="middle" font-family="Liberation Serif,serif" font-weight="bold" font-size="14" fill="#e8a060">A</text>
  <path d="M17 8 L24 8 M17 11 L24 11 M17 14 L24 14 M9 19 L24 19 M9 22 L24 22" stroke="#5f92cc" stroke-width="1.300"/>
 </svg>
 <!-- GW disc -->
 <svg class="abs" style="left:630px;top:3px" width="34" height="35" viewBox="0 0 34 35">
  <circle cx="20" cy="13" r="10" fill="#c9c9c9" stroke="#8d8d8d"/><circle cx="20" cy="13" r="3" fill="#555"/>
  <path d="M13 8 A10 10 0 0 1 27 6 L20 13 Z" fill="#a6d08a" opacity=".7"/>
  <rect x="6" y="16" width="20" height="5" fill="#8a8a8a" stroke="#555"/><rect x="8" y="17.500" width="12" height="1.500" fill="#d05050"/>
  <path d="M5 10 L12 3" stroke="#444" stroke-width="2"/>
  <path d="M12 24 C6 24 5 31 10 32 C13 32 14 30 14 28 L11 28 M15 25 L19 32 L22 27 L25 32 L30 23" fill="none" stroke="#b7d531" stroke-width="2.600"/>
 </svg>
 <!-- IV -->
 <svg class="abs" style="left:692px;top:8px" width="34" height="24" viewBox="0 0 34 24">
  <text x="17" y="20" text-anchor="middle" font-family="Liberation Serif,serif" font-weight="bold" font-size="25" fill="#0a0a0a" stroke="#fff" stroke-width="2.600" paint-order="stroke" letter-spacing="0">IV</text>
 </svg>
 <!-- norton -->
 <svg class="abs" style="left:755px;top:3px" width="34" height="35" viewBox="0 0 34 35">
  <circle cx="16" cy="19" r="12" fill="#fff" stroke="#f3b61f" stroke-width="5"/>
  <path d="M9 18 L15 25 L30 4" fill="none" stroke="#111" stroke-width="3.400"/>
 </svg>
 <!-- betaflight -->
 <svg class="abs" style="left:818px;top:4px" width="30" height="32" viewBox="0 0 30 32">
  <rect width="30" height="30" y="1" rx="2" fill="#2b2b2b"/>
  <path d="M4 9 L17 16 C19 13 23 14 25 18 L21 18 C22 21 24 22 26 21 C24 25 18 26 16 23 C15 21 15.500 19 16.500 18 L9 17 C6 15 5 12 4 9 Z" fill="#f3b61f"/>
 </svg>
 <!-- photoshop -->
 <svg class="abs" style="left:880px;top:5px" width="30" height="29" viewBox="0 0 30 29">
  <rect x="1" y="1" width="28" height="27" fill="#0c1458" stroke="#8fb3f5" stroke-width="2"/>
  <text x="15" y="21" text-anchor="middle" font-family="Liberation Sans,sans-serif" font-weight="bold" font-size="16" fill="#a8c8ff">Ps</text>
 </svg>
 <!-- vlc -->
 <svg class="abs" style="left:942px;top:3px" width="30" height="35" viewBox="0 0 30 35">
  <path d="M12.500 2 L17.500 2 L25 27 L5 27 Z" fill="#f48b1a"/>
  <path d="M10.300 9.500 L19.700 9.500 L21.600 16 L8.400 16 Z" fill="#f4f4f4"/><path d="M7 21 L23 21 L24.500 25.500 L5.500 25.500 Z" fill="#f4f4f4" opacity=".85"/>
  <path d="M2 26 L28 26 L29 33 L1 33 Z" fill="#f07a10"/>
 </svg>
 <!-- blheli -->
 <svg class="abs" style="left:1003px;top:5px" width="32" height="30" viewBox="0 0 32 30">
  <rect width="32" height="30" rx="2" fill="#262626"/>
  <text x="16" y="11.500" text-anchor="middle" font-family="Liberation Sans,sans-serif" font-weight="bold" font-size="8.500" fill="#7b2fd0">BLHELI</text>
  <text x="16" y="17.500" text-anchor="middle" font-family="Liberation Sans,sans-serif" font-weight="bold" font-size="3.600" fill="#fff">CONFIGURATOR</text>
  <rect x="7" y="20" width="18" height="7" fill="#4a1a90"/><rect x="10" y="22" width="12" height="1.500" fill="#7b4fd0"/>
 </svg>
 <!-- paint -->
 <svg class="abs" style="left:1062px;top:3px" width="38" height="36" viewBox="0 0 38 36">
  <path d="M3 22 C2 14 10 9 19 10 C28 11 31 17 29 23 C27 28 22 26 20 28 C18 30 21 33 16 33 C9 33 4 28 3 22 Z" fill="#dfeaf6" stroke="#8fa8c4"/>
  <circle cx="9" cy="20" r="2.600" fill="#3f8fe0"/><circle cx="14" cy="14.500" r="2.600" fill="#3fae4f"/><circle cx="21" cy="14" r="2.600" fill="#e8c53a"/><circle cx="25.500" cy="19" r="2.600" fill="#e05a3a"/><circle cx="11" cy="26.500" r="2.300" fill="#fff"/>
  <path d="M18 33 L30 8 L32.500 9.200 L21 34 Z" fill="#e0a04a"/><path d="M30 8 L31.500 2 C34 3 35 6 32.500 9.200 Z" fill="#c9825a"/>
 </svg>
 <!-- tray -->
 <svg class="abs" style="left:1714px;top:10px" width="120" height="24" viewBox="0 0 120 24">
  <path d="M4.500 13.500 L8.500 8.500 L12.500 13.500 Z" fill="#fff"/>
  <path d="M27 4 L27 18" stroke="#fff" stroke-width="1.300"/><path d="M28 4.500 L34 4.500 L34 10 L28 10 Z" fill="#fff"/><path d="M35 6.500 L40 6.500 L40 11 L35 11 Z" fill="#ddd"/>
  <path d="M37 9 L42.500 18.500 L31.500 18.500 Z" fill="#f3d23c" stroke="#b99512" stroke-width=".6"/><rect x="36.400" y="12" width="1.300" height="3.500" fill="#222"/><rect x="36.400" y="16.200" width="1.300" height="1.200" fill="#222"/>
  <path d="M55 3 L58.500 5.500 L55 8 L51.500 5.500 Z M62 3 L65.500 5.500 L62 8 L58.500 5.500 Z M55 8.500 L58.500 11 L55 13.500 L51.500 11 Z" fill="#9aa3ad"/>
  <circle cx="62" cy="13.500" r="4.600" fill="#d8232a"/><path d="M60 11.500 L64 15.500 M64 11.500 L60 15.500" stroke="#fff" stroke-width="1.400"/>
  <rect x="79" y="6.500" width="10" height="8" fill="#3a4450" stroke="#fff" stroke-width="1.300"/><path d="M81 17.500 L88 17.500 M84.500 14.500 L84.500 17.500" stroke="#fff" stroke-width="1.400"/>
  <path d="M75 4 L75 9 L78 9 L78 4 M76.500 9 L76.500 18 L80 18" fill="none" stroke="#fff" stroke-width="1.200"/>
  <path d="M98.500 9 L101 9 L105 5 L105 18 L101 14 L98.500 14 Z" fill="#fff"/>
  <path d="M107.500 9 A3.500 3.500 0 0 1 107.500 14 M109.500 6.500 A7 7 0 0 1 109.500 16.500" fill="none" stroke="#e8e8e8" stroke-width="1.200"/>
 </svg>
 <div class="clk abs" style="top:5px">5:48 PM</div>
 <div class="clk abs" style="top:22.5px">1/26/2018</div>
 <div class="sd abs"></div>
</div>
</body>
</html>
